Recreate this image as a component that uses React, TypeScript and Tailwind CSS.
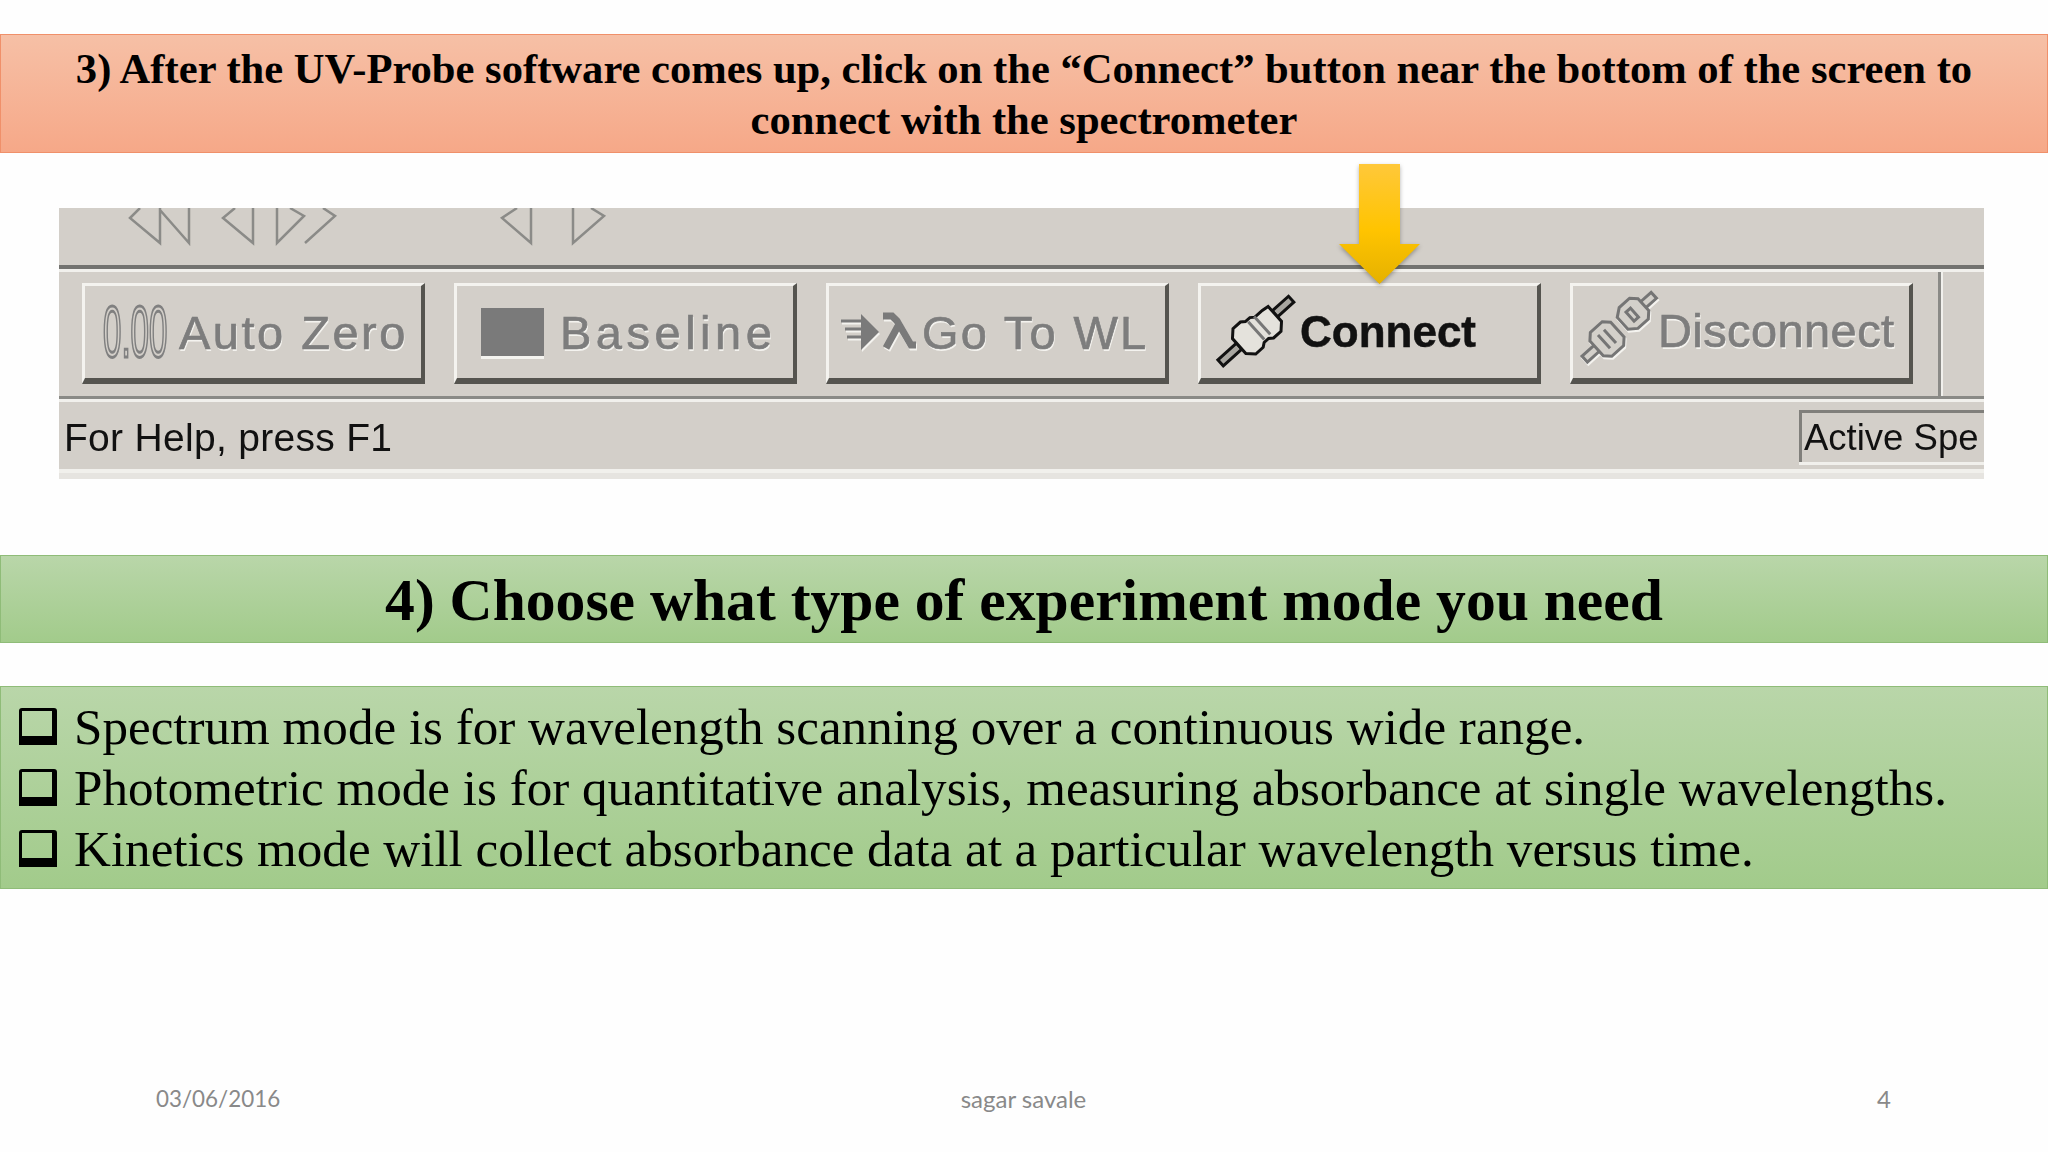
import type { ReactNode } from "react";

const bullets = [
  "Spectrum mode is for wavelength scanning over a continuous wide range.",
  "Photometric mode is for quantitative analysis, measuring absorbance at single wavelengths.",
  "Kinetics mode will collect absorbance data at a particular wavelength versus time.",
];

const ConnectIcon = () => (
  <svg className="ml-[11px] shrink-0" width="90" height="80" viewBox="0 0 90 80" overflow="visible">
    <g transform="rotate(48 45 38)" stroke="#111" strokeWidth="3">
      <rect x="41" y="-8" width="8" height="22" fill="#a8a6a0" />
      <rect x="41" y="62" width="8" height="25" fill="#a8a6a0" />
      <path d="M35 14h20l7 7v10l-3 4v6l3 4v10l-7 7H35l-7-7V45l3-4v-6l3-4V21z" fill="#e4e2dc" />
      <path d="M33 31h24M33 39h24" stroke="#777" fill="none" />
    </g>
  </svg>
);

const DisconnectIcon = () => (
  <svg
    className="-mt-[6px] ml-[5px] shrink-0 drop-shadow-[1px_2px_0_#f4f3ef]"
    width="90"
    height="80"
    viewBox="0 0 90 80"
    overflow="visible"
    stroke="#757575"
    strokeWidth="3"
    fill="#d3d0ca"
  >
    <g transform="translate(29 50) rotate(48)">
      <rect x="-4" y="12" width="8" height="18" />
      <path d="M-10 -14h20l6 6v16l-6 6h-20l-6-6v-16z" />
      <path d="M-9 -4h18M-9 4h18" />
    </g>
    <g transform="translate(55 25) rotate(48)">
      <rect x="-4" y="-28" width="8" height="16" />
      <path d="M-8 -14h16l6 6v14l-6 8h-16l-6-8v-14z" />
      <path d="M-6 -2h12v6h-12z" />
    </g>
  </svg>
);

const GoToIcon = () => (
  <svg className="ml-[10px] shrink-0 drop-shadow-[1px_2px_0_#f4f3ef]" width="80" height="40" viewBox="0 0 80 40" fill="none" stroke="#7a7a7a">
    <path d="M2 9h22M6 17h18M8 25h16" strokeWidth="3" />
    <path d="M22 2l18 18-18 18z" fill="#7a7a7a" stroke="none" />
    <path d="M44 4h9l5 5 14 24h5M59 14L47 36" strokeWidth="7" />
  </svg>
);

const ToolButton = ({ children }: { children: ReactNode }) => (
  <div className="flex h-[101px] w-[343px] items-center border-t-[3px] border-r-[4px] border-b-[6px] border-l-[3px] border-t-[#f4f3ef] border-r-[#55544f] border-b-[#55544f] border-l-[#f4f3ef]">
    {children}
  </div>
);

const disabledText =
  "font-['Liberation_Sans'] text-[47px] leading-none whitespace-nowrap text-[#7d7d7d] [-webkit-text-stroke:0.7px_#7d7d7d] [text-shadow:1px_2px_0_#f4f3ef]";

const Toolbar = () => (
  <div className="mt-[55px] mr-[64px] ml-[59px] h-[271px] overflow-hidden bg-[#d3cfc9] blur-[0.6px]">
    <div className="h-[57px]">
      <svg width="560" height="57" viewBox="0 0 560 57" fill="none" stroke="#8b8b88" strokeWidth="2.5">
        <path d="M81 0L71 10l30 25V0M101 2l29 33V0" />
        <path d="M176 0l-12 10 30 25V0" />
        <path d="M218 0v35l27-27-14-8M246 35l30-27-12-8" />
        <path d="M458 0l-15 10 29 25V0" />
        <path d="M514 0v35l31-27-13-8" />
      </svg>
    </div>
    <div className="h-[4px] bg-[#737370]" />
    <div className="h-[3px] bg-[#f1f0ec]" />
    <div className="flex h-[124px] gap-[29px] pt-[11px] pl-[23px]">
      <ToolButton>
        <span className="ml-[18px] w-[65px] shrink-0 origin-left scale-x-[0.46] font-['Liberation_Sans'] text-[72px] leading-none text-transparent [-webkit-text-stroke:3px_#808080]">
          0.00
        </span>
        <span className={`ml-[11px] tracking-[2.5px] ${disabledText}`}>Auto Zero</span>
      </ToolButton>
      <ToolButton>
        <div className="ml-[24px] h-[48px] w-[63px] shrink-0 bg-[#7a7a7a] shadow-[0_3px_0_#f4f3ef]" />
        <span className={`ml-[16px] tracking-[4.5px] ${disabledText}`}>Baseline</span>
      </ToolButton>
      <ToolButton>
        <GoToIcon />
        <span className={`ml-[3px] tracking-[2.3px] ${disabledText}`}>Go To WL</span>
      </ToolButton>
      <ToolButton>
        <ConnectIcon />
        <span className="-ml-[2px] font-['Liberation_Sans'] text-[44px] leading-none font-bold text-[#111] [-webkit-text-stroke:0.5px_#111]">
          Connect
        </span>
      </ToolButton>
      <ToolButton>
        <DisconnectIcon />
        <span className={`-mt-[4px] -ml-[10px] tracking-[0.4px] ${disabledText}`}>Disconnect</span>
      </ToolButton>
      <div className="-mt-[11px] -ml-[4px] h-[124px] w-[3px] bg-[#8a8a86] shadow-[2px_0_0_#f1f0ec]" />
    </div>
    <div className="h-[3px] bg-[#8a8a86]" />
    <div className="h-[3px] bg-[#f1f0ec]" />
    <div className="flex h-[67px] items-center justify-between pl-[5px]">
      <span className="pt-[3px] font-['Liberation_Sans'] text-[39px] leading-none tracking-[0.3px] text-[#111]">For Help, press F1</span>
      <div className="flex h-[52px] w-[185px] items-center border-t-[3px] border-l-[3px] border-t-[#807f7b] border-l-[#807f7b] pl-[2px] whitespace-nowrap shadow-[0_3px_0_#f1f0ec]">
        <span className="pt-[2px] font-['Liberation_Sans'] text-[36.500px] leading-none text-[#111]">Active Spe</span>
      </div>
    </div>
    <div className="h-[4px] bg-[#f1f0ec]" />
    <div className="h-[6px] bg-[#e6e4e0]" />
  </div>
);

const App = () => {
  return (
    <div className="relative flex h-[1152px] w-[2048px] flex-col overflow-hidden bg-[#fefefe]">
      <div className="mt-[34px] flex h-[119px] flex-col items-center justify-center border border-[#f0906a] bg-linear-to-b from-[#f6c0a6] to-[#f6a888] pt-[1px] text-center font-['Liberation_Serif'] text-[42.6px] leading-[51px] font-bold whitespace-nowrap text-black">
        <p>3) After the UV-Probe software comes up, click on the “Connect” button near the bottom of the screen to</p>
        <p>connect with the spectrometer</p>
      </div>

      <Toolbar />

      <div className="mt-[76px] flex h-[88px] items-center justify-center border border-[#8fbc78] bg-linear-to-b from-[#b9d6a9] to-[#a2cb8b] pt-[4px] font-['Liberation_Serif'] text-[59.6px] leading-none font-bold text-black">
        4) Choose what type of experiment mode you need
      </div>

      <div className="mt-[43px] flex h-[203px] flex-col justify-center border border-[#8fbc78] bg-linear-to-b from-[#b9d6a9] to-[#a2cb8b] pl-[18px] font-['Liberation_Serif'] text-[51.1px] leading-[61px] text-black">
        {bullets.map((line) => (
          <div key={line} className="flex items-center">
            <div className="h-[37px] w-[38px] shrink-0 rounded-t-[3px] border-t-[3px] border-r-[5px] border-b-[9px] border-l-[3px] border-black" />
            <span className="ml-[17px] whitespace-nowrap">{line}</span>
          </div>
        ))}
      </div>

      <div className="mt-auto mb-[38px] grid grid-cols-3 pr-[157px] pl-[156px] font-['Lato'] text-[24px] leading-[30px] text-[#898989]">
        <span className="text-[22.4px]">03/06/2016</span>
        <span className="text-center">sagar savale</span>
        <span className="text-right">4</span>
      </div>

      {/* callout arrow pointing at the Connect button */}
      <svg className="absolute top-[164px] left-[1335px] drop-shadow-[0_2px_2px_rgba(0,0,0,0.3)]" width="90" height="122" viewBox="0 0 90 122">
        <defs>
          <linearGradient id="arrowFill" x1="0" y1="0" x2="0" y2="1">
            <stop offset="0" stopColor="#ffc83a" />
            <stop offset="0.55" stopColor="#ffc400" />
            <stop offset="1" stopColor="#e5b100" />
          </linearGradient>
        </defs>
        <path d="M24 0h41v80h20L44.500 120 4 80h20z" fill="url(#arrowFill)" />
      </svg>
    </div>
  );
};

export default App;
